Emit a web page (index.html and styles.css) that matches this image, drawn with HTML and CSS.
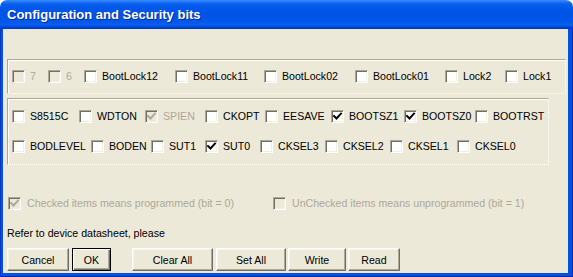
FILE: index.html
```html
<!DOCTYPE html>
<html>
<head>
<meta charset="utf-8">
<link rel="stylesheet" href="styles.css">
</head>
<body>
<div class="window">
  <div class="titlebar"><span class="title">Configuration and Security bits</span></div>
  <div class="frame">
    <div class="client">
      <div class="group g1">
        <div class="row r1">
          <label class="item dis"><span class="cb"></span><span class="lbl">7</span></label>
          <label class="item dis"><span class="cb"></span><span class="lbl">6</span></label>
          <label class="item"><span class="cb"></span><span class="lbl">BootLock12</span></label>
          <label class="item"><span class="cb"></span><span class="lbl">BootLock11</span></label>
          <label class="item"><span class="cb"></span><span class="lbl">BootLock02</span></label>
          <label class="item"><span class="cb"></span><span class="lbl">BootLock01</span></label>
          <label class="item"><span class="cb"></span><span class="lbl">Lock2</span></label>
          <label class="item"><span class="cb"></span><span class="lbl">Lock1</span></label>
        </div>
      </div>
      <div class="group g2">
        <div class="row r2">
          <label class="item"><span class="cb"></span><span class="lbl">S8515C</span></label>
          <label class="item"><span class="cb"></span><span class="lbl">WDTON</span></label>
          <label class="item dis"><span class="cb"><svg viewBox="0 0 11 11" width="11" height="11"><polyline points="2,5 4.5,7.5 9,2.5" /></svg></span><span class="lbl">SPIEN</span></label>
          <label class="item"><span class="cb"></span><span class="lbl">CKOPT</span></label>
          <label class="item"><span class="cb"></span><span class="lbl">EESAVE</span></label>
          <label class="item"><span class="cb"><svg viewBox="0 0 11 11" width="11" height="11"><polyline points="2,5 4.5,7.5 9,2.5" /></svg></span><span class="lbl">BOOTSZ1</span></label>
          <label class="item"><span class="cb"><svg viewBox="0 0 11 11" width="11" height="11"><polyline points="2,5 4.5,7.5 9,2.5" /></svg></span><span class="lbl">BOOTSZ0</span></label>
          <label class="item"><span class="cb"></span><span class="lbl">BOOTRST</span></label>
        </div>
        <div class="row r3">
          <label class="item"><span class="cb"></span><span class="lbl">BODLEVEL</span></label>
          <label class="item"><span class="cb"></span><span class="lbl">BODEN</span></label>
          <label class="item"><span class="cb"></span><span class="lbl">SUT1</span></label>
          <label class="item"><span class="cb"><svg viewBox="0 0 11 11" width="11" height="11"><polyline points="2,5 4.5,7.5 9,2.5" /></svg></span><span class="lbl">SUT0</span></label>
          <label class="item"><span class="cb"></span><span class="lbl">CKSEL3</span></label>
          <label class="item"><span class="cb"></span><span class="lbl">CKSEL2</span></label>
          <label class="item"><span class="cb"></span><span class="lbl">CKSEL1</span></label>
          <label class="item"><span class="cb"></span><span class="lbl">CKSEL0</span></label>
        </div>
      </div>
      <div class="legend">
        <label class="item dis wide"><span class="cb"><svg viewBox="0 0 11 11" width="11" height="11"><polyline points="2,5 4.5,7.5 9,2.5" /></svg></span><span class="lbl">Checked items means programmed (bit = 0)</span></label>
        <label class="item dis wide"><span class="cb"></span><span class="lbl">UnChecked items means unprogrammed (bit = 1)</span></label>
      </div>
      <div class="note">Refer to device datasheet, please</div>
      <div class="buttons">
        <button class="btn b-cancel">Cancel</button>
        <button class="btn b-ok default">OK</button>
        <button class="btn b-clear">Clear All</button>
        <button class="btn b-set">Set All</button>
        <button class="btn b-write">Write</button>
        <button class="btn b-read">Read</button>
      </div>
    </div>
  </div>
</div>
</body>
</html>
```

FILE: styles.css
```css
html, body {
  margin: 0;
  padding: 0;
  background: #ffffff;
}
body {
  font-family: "Liberation Sans", Arial, sans-serif;
  font-size: 10.6px;
  color: #000;
}
.window {
  width: 573px;
  height: 277px;
  display: flex;
  flex-direction: column;
}
.titlebar {
  height: 29px;
  flex: none;
  box-sizing: border-box;
  border-radius: 7px 7px 0 0;
  background: linear-gradient(to bottom,
    #3a8dff 0px, #1f74f8 2px, #0a5ff0 4px, #0057e8 8px,
    #0053e4 16px, #0058ea 22px, #0b5ff0 25px, #0047d8 27px, #0033c0 29px);
  display: flex;
  align-items: center;
  padding: 0 0 1px 7px;
}
.title {
  color: #ffffff;
  font-weight: bold;
  font-size: 13px;
  text-shadow: 1px 1px 0 #0a2a9a;
}
.frame {
  flex: 1;
  display: flex;
  background: #0451e0;
  border-left: 1px solid #0838c8;
  border-right: 1px solid #0028a8;
  border-bottom: 1px solid #0028a8;
  padding: 0 4px 3px 2px;
}
.client {
  flex: 1;
  background: #ece9d8;
  display: flex;
  flex-direction: column;
  padding-top: 30px;
}
.group {
  border-top: 1px solid #aca899;
  border-left: 1px solid #aca899;
  border-right: 1px dotted #ffffff;
  border-bottom: 1px dotted #ffffff;
  box-shadow: inset 1px 1px 0 #ffffff;
  margin-left: 4px;
  box-sizing: border-box;
}
.g1 {
  height: 35px;
  margin-right: 2px;
  padding-top: 10px;
}
.g2 {
  margin-top: 4px;
  width: 542px;
  height: 67px;
  padding-top: 11px;
  display: flex;
  flex-direction: column;
  gap: 17px;
}
.row {
  display: grid;
  padding-left: 4px;
  height: 13px;
}
.r1 { grid-template-columns: 36px 36px 91px 89px 91px 90px 60px auto; }
.r2 { grid-template-columns: 67px 66px 60px 60px 66px 73px 71px auto; }
.r3 { grid-template-columns: 79px 60px 54px 55px 65px 65px 67px auto; }
.item {
  display: flex;
  align-items: center;
  gap: 5px;
  height: 13px;
  white-space: nowrap;
}
.lbl {
  line-height: 13px;
}
.cb {
  width: 13px;
  height: 13px;
  flex: none;
  box-sizing: border-box;
  background: #ffffff;
  border-top: 1px solid #aca899;
  border-left: 1px solid #aca899;
  border-right: 1px solid #ffffff;
  border-bottom: 1px solid #ffffff;
  box-shadow: inset 1px 1px 0 #716f64, inset -1px -1px 0 #f1efe2;
  display: flex;
  align-items: center;
  justify-content: center;
}
.cb svg {
  display: block;
}
.cb polyline {
  fill: none;
  stroke: #000000;
  stroke-width: 1.9;
  stroke-linecap: square;
}
.dis .lbl { color: #aca899; }
.dis .cb { background: #ece9d8; }
.dis .cb polyline { stroke: #aca899; }
.legend {
  margin-top: 32px;
  display: grid;
  grid-template-columns: 265px auto;
  padding-left: 5px;
}
.legend .item { gap: 6px; }
.note {
  margin-top: 17px;
  padding-left: 4px;
  line-height: 13px;
}
.buttons {
  margin-top: 8px;
  display: flex;
  padding-left: 4px;
}
.btn {
  height: 23px;
  box-sizing: border-box;
  font-family: "Liberation Sans", Arial, sans-serif;
  font-size: 10.6px;
  color: #000;
  background: #ece9d8;
  border-top: 1px solid #ffffff;
  border-left: 1px solid #ffffff;
  border-right: 1px solid #716f64;
  border-bottom: 1px solid #716f64;
  box-shadow: inset -1px -1px 0 #aca899, inset 1px 1px 0 #f5f4ea;
  padding: 0;
  margin: 0;
  border-radius: 0;
}
.btn.default {
  border: 1px solid #000000;
  box-shadow: inset 1px 1px 0 #ffffff, inset -1px -1px 0 #716f64, inset -2px -2px 0 #aca899;
}
.b-cancel { width: 62px; }
.b-ok { width: 39px; margin-left: 3px; }
.b-clear { width: 81px; margin-left: 21px; }
.b-set { width: 70px; margin-left: 3px; }
.b-write { width: 58px; margin-left: 2px; }
.b-read { width: 52px; margin-left: 2px; }
```
